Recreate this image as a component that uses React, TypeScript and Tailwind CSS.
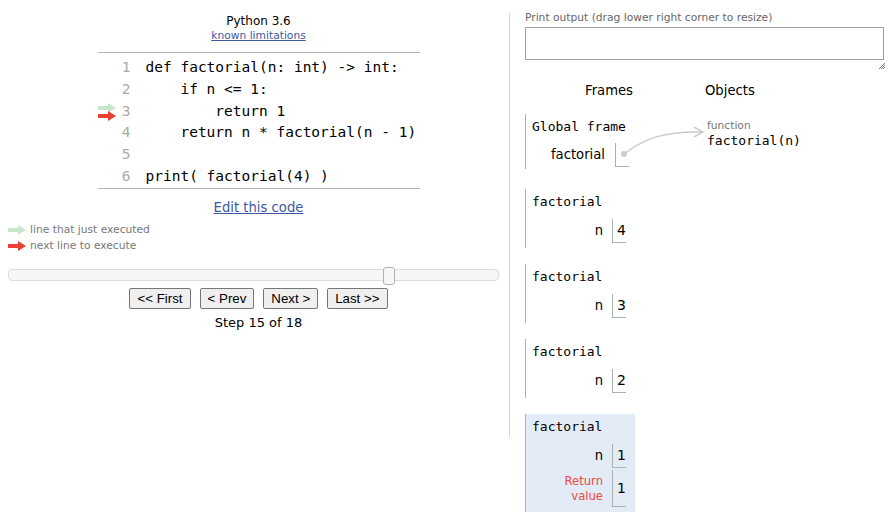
import React from "react";

const sans = "font-['DejaVu_Sans',Verdana,sans-serif]";
const mono = "font-['DejaVu_Sans_Mono',monospace]";

const code = [
  "def factorial(n: int) -> int:",
  "    if n <= 1:",
  "        return 1",
  "    return n * factorial(n - 1)",
  "",
  "print( factorial(4) )",
];

const Arrow = ({ color }: { color: string }) => (
  <svg width="18" height="10" viewBox="0 0 18 10" className="block">
    <rect x="0" y="3" width="11" height="4" fill={color} />
    <polygon points="10,0 18,5 10,10" fill={color} />
  </svg>
);

const ValueBox = ({ value, tall }: { value: string; tall?: boolean }) => (
  <div
    className={`w-[14px] ${tall ? "h-[37px]" : "h-[24px]"} border-l border-b border-[#a6b3b6] pl-[4px] flex items-center text-[14px] text-black ${sans}`}
  >
    {value}
  </div>
);

const Frame = ({
  n,
  highlighted,
}: {
  n: string;
  highlighted?: boolean;
}) => (
  <div
    className={`w-[110px] border-l border-[#a6b3b6] pl-[6px] pt-[5px] pb-[5px] ${
      highlighted ? "bg-[#e2ebf6]" : ""
    }`}
  >
    <div className={`${mono} text-[13px] leading-[16px] text-black`}>
      factorial
    </div>
    <div className="mt-[9px] flex items-center">
      <div className={`w-[80px] text-right pr-[9px] text-[13.2px] ${sans}`}>
        n
      </div>
      <ValueBox value={n} />
    </div>
    {highlighted && (
      <div className="mt-[2px] flex items-center">
        <div
          className={`w-[80px] text-right pr-[9px] text-[11.6px] leading-[15px] text-[#ea4a40] ${sans}`}
        >
          Return
          <br />
          value
        </div>
        <ValueBox value="1" tall />
      </div>
    )}
  </div>
);

export default function App() {
  return (
    <div className="relative w-[890px] h-[522px] bg-white flex text-black overflow-hidden">
      {/* left: code + controls */}
      <div className="w-[509px] pl-2 flex flex-col items-center pt-[13px]">
        <div className={`${sans} text-[12px] leading-[16px]`}>Python 3.6</div>
        <a
          href="#"
          className={`${sans} text-[10.7px] leading-[14px] text-[#3d58a2] underline`}
        >
          known limitations
        </a>
        <div className="mt-[9px] w-[322px] border-t border-b border-[#b4b4b4] pt-[4px]">
          {code.map((line, i) => (
            <div key={i} className="h-[21.8px] flex items-center">
              <div className="w-[22px] flex flex-col justify-center">
                {i === 2 && (
                  <div className="flex flex-col -mt-[1px]">
                    <div className="mt-[-4px]">
                      <Arrow color="#c9e6ca" />
                    </div>
                    <div className="-mt-[2px] mb-[-6px]">
                      <Arrow color="#e93f34" />
                    </div>
                  </div>
                )}
              </div>
              <div
                className={`${mono} w-[11px] text-right text-[14.5px] text-[#aaaaaa]`}
              >
                {i + 1}
              </div>
              <pre className={`${mono} ml-[15px] text-[14.5px] text-black`}>
                {line}
              </pre>
            </div>
          ))}
        </div>
        <a
          href="#"
          className={`${sans} mt-[10px] text-[13.2px] leading-[18px] text-[#3d58a2] underline`}
        >
          Edit this code
        </a>
        <div className={`self-start mt-[5px] ${sans} text-[10.7px] text-[#777]`}>
          <div className="flex items-center gap-[4px] h-[16px]">
            <Arrow color="#c9e6ca" />
            <span>line that just executed</span>
          </div>
          <div className="flex items-center gap-[4px] h-[16px]">
            <Arrow color="#e93f34" />
            <span>next line to execute</span>
          </div>
        </div>
        <div className="self-start relative mt-[15px] w-[491px] h-[12px] rounded-[4px] border border-[#dddddd] bg-[#f6f6f6]">
          <div className="absolute left-[374px] top-[-3px] w-[12px] h-[18px] rounded-[3px] border border-[#b0b0b0] bg-[#f6f6f6]" />
        </div>
        <div className="mt-[7px] flex gap-[9px] font-['Liberation_Sans',Arial,sans-serif] text-[13.3px]">
          {["<< First", "< Prev", "Next >", "Last >>"].map((b) => (
            <button
              key={b}
              className="h-[21px] px-[7px] border border-[#767676] rounded-[2px] bg-[#efefef] leading-none"
            >
              {b}
            </button>
          ))}
        </div>
        <div className={`${sans} mt-[5px] text-[13px] leading-[18px]`}>
          Step 15 of 18
        </div>
      </div>

      {/* divider */}
      <div className="mt-[13px] w-px h-[424px] bg-[#d4d4d4]" />

      {/* right: output + frames */}
      <div className="pl-[15px] pt-[11px] flex flex-col">
        <div className={`${sans} text-[10.7px] leading-[14px] text-[#666]`}>
          Print output (drag lower right corner to resize)
        </div>
        <div className="mt-[2px] w-[359px] h-[33px] border border-[#a0a0a0] bg-white" />
        <div className="h-[12px] flex justify-end">
          <svg width="6" height="6" viewBox="0 0 6 6" className="mt-[3px] -mr-[1px]">
            <path d="M6 0 L0 6 M6 2 L2 6 M6 4 L4 6" stroke="#555" strokeWidth="0.8" />
          </svg>
        </div>
        <div className={`flex ${sans} text-[13.2px] leading-[18px] mt-[10px]`}>
          <div className="ml-[60px]">Frames</div>
          <div className="ml-[72px]">Objects</div>
        </div>
        <div className="flex mt-[14px]">
          <div className="w-[182px] flex flex-col gap-[20px]">
            <div className="w-[110px] border-l border-[#a6b3b6] pl-[6px] pt-[5px] pb-[2px]">
              <div className={`${mono} text-[13px] leading-[16px]`}>
                Global frame
              </div>
              <div className="mt-[8px] flex items-center">
                <div className={`w-[83px] text-right pr-[10px] text-[13.2px] ${sans}`}>
                  factorial
                </div>
                <ValueBox value="" />
              </div>
            </div>
            <div className="flex flex-col gap-[16px]">
              <Frame n="4" />
              <Frame n="3" />
              <Frame n="2" />
              <Frame n="1" highlighted />
            </div>
          </div>
          <div className="pt-[5px]">
            <div className={`${sans} text-[10.7px] leading-[14px] text-[#777]`}>
              function
            </div>
            <div className={`${mono} text-[13px] leading-[16px]`}>
              factorial(n)
            </div>
          </div>
        </div>
      </div>

      {/* pointer from global frame to function object */}
      <svg
        className="absolute left-0 top-0 pointer-events-none"
        width="890"
        height="522"
      >
        <circle cx="624" cy="154" r="3" fill="#cccccc" />
        <path
          d="M624 154 C 645 138, 665 131, 702 132"
          stroke="#cccccc"
          strokeWidth="1.5"
          fill="none"
        />
        <path
          d="M694 127 L703 132 L694 137"
          stroke="#cccccc"
          strokeWidth="1.5"
          fill="none"
        />
      </svg>
    </div>
  );
}
